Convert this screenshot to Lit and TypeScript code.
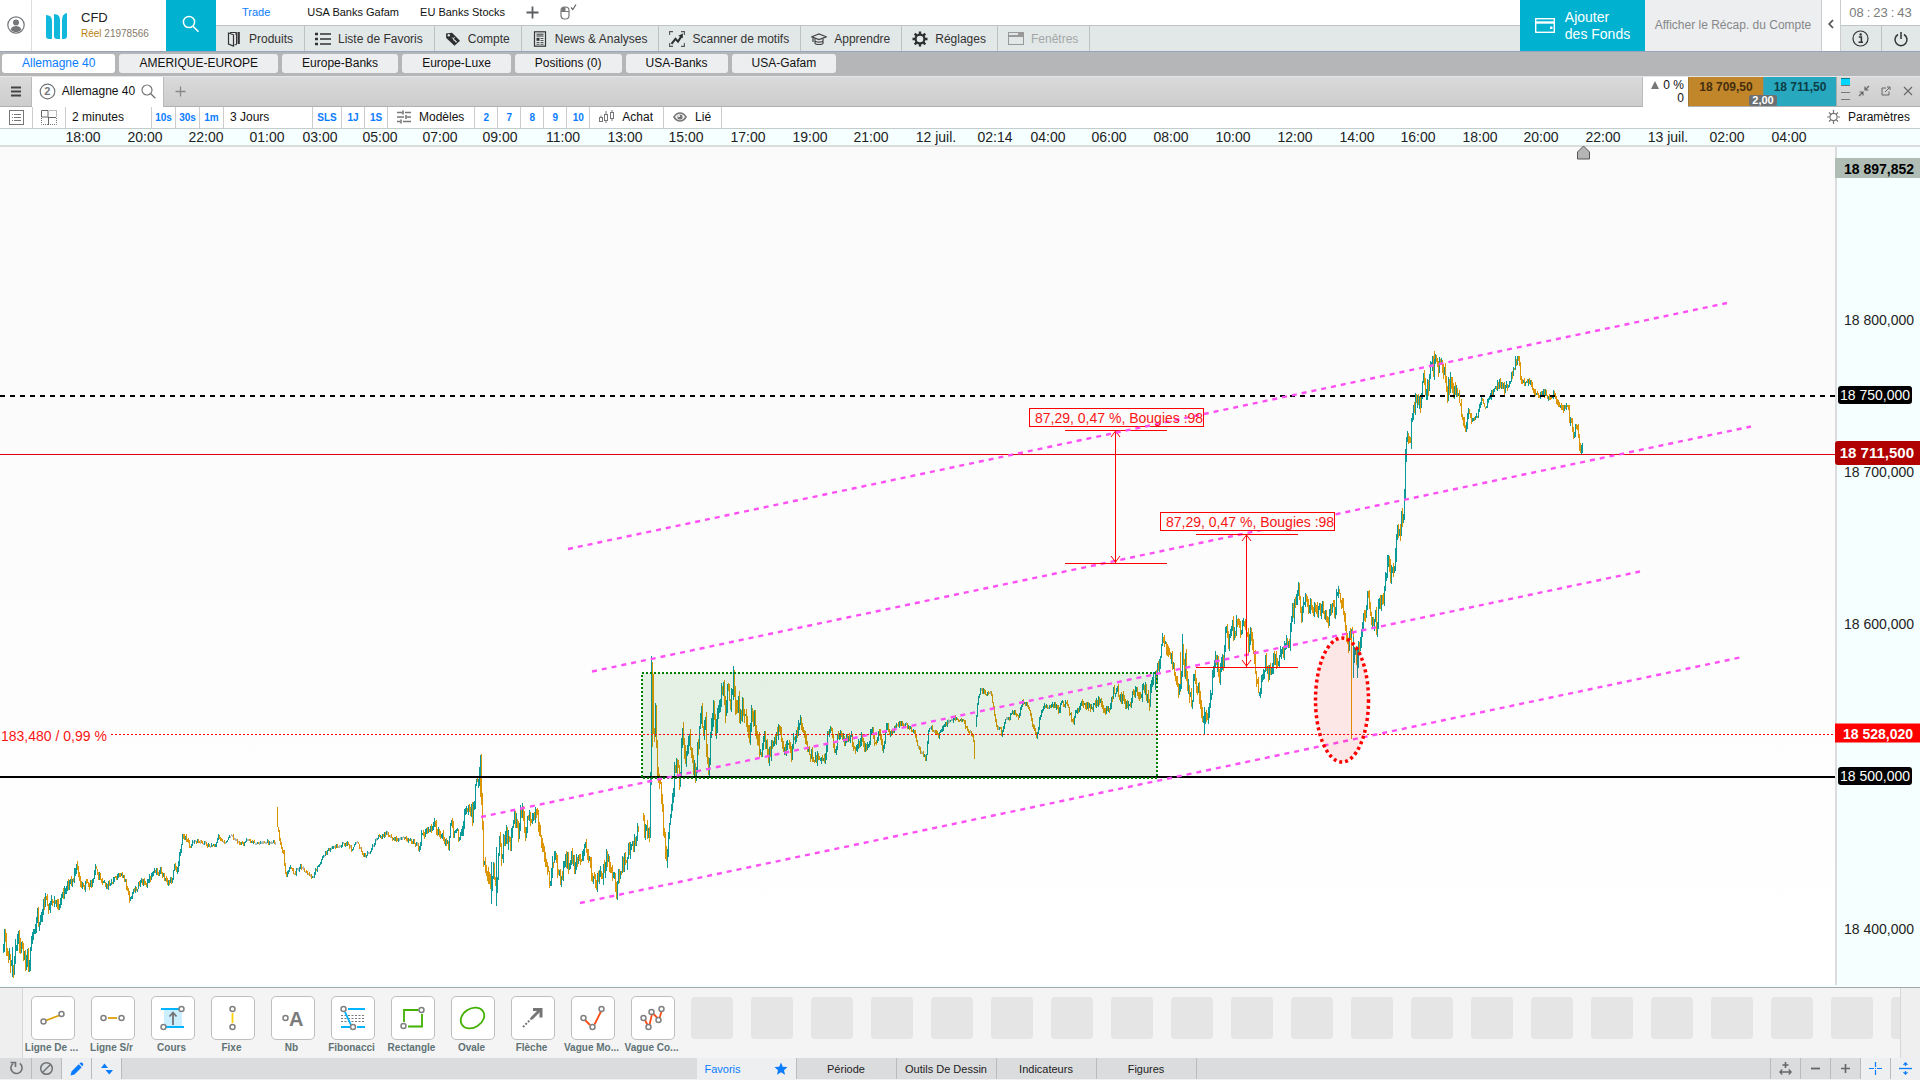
import { LitElement, html, svg, css, nothing } from "lit";
import { customElement, state } from "lit/decorators.js";
import { classMap } from "lit/directives/class-map.js";

/* ---------- icons ---------- */

const icon = (w: number, h: number, body: unknown) =>
  html`<svg class="ic" width=${w} height=${h} viewBox="0 0 ${w} ${h}" aria-hidden="true">${body}</svg>`;

const I = {
  user: icon(18, 20, svg`<circle cx="9" cy="10" r="8.2" fill="none" stroke="#75787b" stroke-width="1.2"/><circle cx="9" cy="7.6" r="3" fill="#75787b"/><path d="M3.6 14.4c1-2.6 3-3.4 5.400-3.400s4.400.8 5.400 3.400c-1.400 1.800-3.300 2.700-5.400 2.700s-4-.9-5.400-2.700z" fill="#75787b"/>`),
  logo: icon(22, 26, svg`<path d="M0 2q6 0 6 6v18H3q-3 0-3-3zM8 1q6 0 6 6v19h-3q-3 0-3-3z" fill="#12b8dc"/><path d="M21 0q-5 1-5 7v19h2q3 0 3-3z" fill="#12b8dc"/>`),
  search: icon(18, 18, svg`<circle cx="7" cy="7" r="5.600" fill="none" stroke="#fff" stroke-width="1.500"/><path d="M11 11.300l5.500 5.500" stroke="#fff" stroke-width="1.600"/>`),
  plusBig: icon(13, 13, svg`<path d="M6.500.5v12M.5 6.500h12" stroke="#5c5f61" stroke-width="1.800"/>`),
  mouse: icon(17, 16, svg`<rect x="1" y="3" width="8" height="12" rx="3.500" fill="none" stroke="#777" stroke-width="1.200"/><path d="M1 7.500h8M5 3v4.500" stroke="#777"/><path d="M1.500 7V5q.5-2 3.500-2v4z" fill="#777"/><path d="M11 3.500l1.800 2 3.200-5" fill="none" stroke="#666" stroke-width="1.200"/>`),
  book: icon(16, 16, svg`<path d="M2.500 2l5 1.800V15l-5-2z" fill="none" stroke="#333" stroke-width="1.200"/><path d="M4 1.500h6.500v12.200H8.500M9 3h1" fill="none" stroke="#333" stroke-width="1"/><path d="M11.500 1h2.300v12h-2.300z" fill="#333"/>`),
  list: icon(16, 14, svg`<path d="M5 2h11M5 7h11M5 12h11" stroke="#333" stroke-width="1.600"/><path d="M0 2h3M0 7h3M0 12h3" stroke="#333" stroke-width="2.600"/>`),
  tag: icon(16, 16, svg`<path d="M1 2.500L7 1.800l8 8-5.500 5L1.200 7z" fill="#2d2f31"/><circle cx="3.800" cy="4.300" r="1.200" fill="#e2e7e7"/><path d="M7 6.500l4.500 4.500M9.800 6.500q-2 .2-1.300 2t1.600 1.300 1 1.800" stroke="#e2e7e7" fill="none"/>`),
  news: icon(16, 16, svg`<rect x="2.500" y=".8" width="11" height="14.400" fill="none" stroke="#333" stroke-width="1.200"/><path d="M4.500 3.200h7M4.500 5h7" stroke="#333"/><path d="M4.500 6.800h3v3h-3z" fill="#333"/><path d="M8.500 7.500h3M8.500 9.500h3M4.500 11.500h3M8.500 11.500h3M4.500 13.300h3M8.500 13.300h3" stroke="#555"/>`),
  scan: icon(16, 16, svg`<path d="M.6 4V.6H4M12 .6h3.400V4M15.400 12v3.400H12M4 15.400H.6V12" fill="none" stroke="#555" stroke-width="1.100"/><path d="M2.500 12.800l4-5 2.500 2.800 3.500-5.500" fill="none" stroke="#2d2f31" stroke-width="2"/><path d="M9.300 4.800l4.500-2.300v4.700z" fill="#2d2f31"/>`),
  cap: icon(16, 14, svg`<path d="M.8 4.800L8 2l7.200 2.800L8 7.600z" fill="none" stroke="#444" stroke-width="1.200"/><path d="M4 6.500v4.500q0 1.500 4 1.500t4-1.500V6.500M4.500 9.500q3.500 1.300 7 0M2 6v4" fill="none" stroke="#444" stroke-width="1.200"/>`),
  gear: icon(16, 16, svg`<circle cx="8" cy="8" r="4.400" fill="none" stroke="#2d2f31" stroke-width="2.200"/><g stroke="#2d2f31" stroke-width="2.400"><path d="M8 .5v3M8 12.500v3M.5 8h3M12.500 8h3M2.700 2.700l2 2M11.300 11.300l2 2M13.300 2.700l-2 2M4.700 11.300l-2 2"/></g>`),
  win: icon(16, 13, svg`<rect x=".5" y=".5" width="15" height="12" fill="none" stroke="#999"/><path d="M1 3.500h9" stroke="#999"/><path d="M10 1h5v3h-5z" fill="#999"/><path d="M1 4.500h14" stroke="#999"/>`),
  wallet: icon(20, 15, svg`<rect x=".7" y=".7" width="18.600" height="13.600" fill="none" stroke="#fff" stroke-width="1.400"/><path d="M1 4.500h18" stroke="#fff" stroke-width="2.400"/><path d="M15 8.500h2.500v2.500H15z" fill="#fff"/>`),
  chev: icon(6, 10, svg`<path d="M5 1L1.200 5 5 9" fill="none" stroke="#555" stroke-width="1.800"/>`),
  info: icon(17, 17, svg`<circle cx="8.500" cy="8.500" r="7.500" fill="none" stroke="#333" stroke-width="1.200"/><path d="M6.800 7h2.600v5M6.500 12.300h4.500" fill="none" stroke="#333" stroke-width="1.500"/><circle cx="8.700" cy="4.500" r="1.200" fill="#333"/>`),
  power: icon(16, 16, svg`<path d="M5 3.500a6 6 0 1 0 6 0M8 1v7" fill="none" stroke="#333" stroke-width="1.500"/>`),
  burger: icon(10, 11, svg`<path d="M0 1.500h10M0 5.500h10M0 9.500h10" stroke="#444" stroke-width="1.800"/>`),
  two: icon(17, 17, svg`<circle cx="8.500" cy="8.500" r="7.300" fill="none" stroke="#75787b" stroke-width="1.200"/>`),
  lens: icon(15, 15, svg`<circle cx="6" cy="6" r="5" fill="none" stroke="#777" stroke-width="1.200"/><path d="M9.600 9.600l4.700 4.700" stroke="#777" stroke-width="1.400"/>`),
  plusThin: icon(11, 11, svg`<path d="M5.500.5v10M.5 5.500h10" stroke="#888" stroke-width="1.300"/>`),
  shrink: icon(12, 12, svg`<path d="M11 1L7.500 4.500M7 1.500V5h3.500M1 11l3.500-3.500M1.500 7H5v3.500" fill="none" stroke="#666" stroke-width="1.200"/>`),
  popout: icon(10, 10, svg`<path d="M5 2H1v7h7V5.500M4 6l4.500-4.500M6 1h3v3" fill="none" stroke="#666" stroke-width="1"/>`),
  close: icon(10, 10, svg`<path d="M1 1l8 8M9 1L1 9" stroke="#666" stroke-width="1.100"/>`),
  listBox: icon(15, 15, svg`<rect x=".5" y=".5" width="14" height="14" fill="none" stroke="#777"/><path d="M5 4.500h7M5 7.500h7M5 10.500h7" stroke="#777"/><path d="M3 4.500h1M3 7.500h1M3 10.500h1" stroke="#777"/>`),
  layout: icon(16, 15, svg`<path d="M.5 7V.5H7V7zM7 7.500h8M7.500 7v8" fill="none" stroke="#666"/><path d="M8.500.5h7v6.500M.5 8v6.500H7M15.500 8v6.500H8" fill="none" stroke="#777" stroke-dasharray="1 1"/>`),
  sliders: icon(14, 14, svg`<path d="M0 2.500h5M8 2.500h6M0 7h7M10 7h4M0 11.500h3M6 11.500h8" stroke="#777" stroke-width="1.300"/><path d="M6 .5v4M9 5v4M4 9.500v4" stroke="#777" stroke-width="1.600"/>`),
  candles: icon(15, 13, svg`<rect x=".5" y="7.500" width="3" height="4" fill="none" stroke="#777"/><path d="M2 5.500v2M7 1v3M7 10.500V13M13 0v2M13 8.500V11" stroke="#777"/><rect x="5.500" y="4.500" width="3" height="6" fill="none" stroke="#777"/><rect x="11.500" y="2.500" width="3" height="6" fill="none" stroke="#777"/>`),
  eye: icon(14, 12, svg`<path d="M1 6q2.500-4 6-4t6 4q-2.500 4-6 4T1 6z" fill="none" stroke="#777" stroke-width="1.600"/><circle cx="7" cy="6" r="2.600" fill="#777"/><circle cx="6" cy="5" r="1.100" fill="#fff"/>`),
  cog: icon(13, 14, svg`<circle cx="6.500" cy="7" r="3.600" fill="none" stroke="#777" stroke-width="1.200"/><path d="M6.500 0v3M6.500 11v3M0 7h2.500M10.500 7H13M2 2.500l2 2M9 9.500l2 2M11 2.500l-2 2M4 9.500l-2 2" stroke="#777" stroke-width="1.200"/>`),
  reload: icon(15, 15, svg`<path d="M10.800 2.400a5.600 5.600 0 1 1-6.500-.1" fill="none" stroke="#6f7274" stroke-width="1.600"/><path d="M1.500 1.500h5v4.500" fill="none" stroke="#6f7274" stroke-width="1.600"/>`),
  forbid: icon(15, 15, svg`<circle cx="7.500" cy="7.500" r="5.800" fill="none" stroke="#6f7274" stroke-width="1.500"/><path d="M11.500 3.500l-8 8" stroke="#6f7274" stroke-width="1.500"/>`),
  pencil: icon(14, 14, svg`<path d="M0.500 13.500l1-4L8.700 2.300l3 3L4.500 12.500zM9.500 1.500l1.200-1q1-.4 1.900.5t.6 2l-1 1.200z" fill="#0a7cff"/>`),
  swap: icon(12, 12, svg`<path d="M0 5h7L3.500.5z" fill="#0a7cff"/><path d="M4.500 7H12l-3.700 4.500z" fill="#0a7cff"/>`),
  star: icon(14, 13, svg`<path d="M7 .5l1.800 4.200 4.700.4-3.500 3.100 1 4.600L7 10.300 3 12.800l1-4.600L.5 5.100l4.700-.4z" fill="#0a7cff"/>`),
  fit: icon(13, 13, svg`<path d="M6.500 0v6M3.500 3h6" stroke="#666" stroke-width="1.600"/><path d="M1 10h11M3.300 7.500L.8 10l2.500 2.500M9.700 7.500l2.500 2.500-2.500 2.500" fill="none" stroke="#666" stroke-width="1.300"/>`),
  minus: icon(11, 11, svg`<path d="M1 5.500h9" stroke="#666" stroke-width="1.800"/>`),
  plus: icon(11, 11, svg`<path d="M1 5.500h9M5.500 1v9" stroke="#666" stroke-width="1.600"/>`),
  cross: icon(13, 13, svg`<path d="M6.500 0v5M6.500 8v5M0 6.500h5M8 6.500h5M6 6.500h1" stroke="#0a7cff" stroke-width="1.200"/>`),
  split: icon(13, 13, svg`<path d="M0 6.500h13" stroke="#0a7cff" stroke-width="1.300"/><path d="M6.500 1v3M6.500 9v3M4.500 2.800l2-2 2 2M4.500 10.200l2 2 2-2" fill="none" stroke="#0a7cff" stroke-width="1.200"/>`),
};

/* Small ring that marks an anchor point of a drawing tool. */
const ring = (x: number, y: number) =>
  svg`<circle cx=${x} cy=${y} r="2.500" fill="#fff" stroke="#808080" stroke-width="1.500"/>`;

const tools = [
  { name: "Ligne De ...", art: svg`<path d="M15 24.500l13-5" stroke="#dca000" stroke-width="1.800"/>${ring(12.500, 25.500)}${ring(30.500, 18)}` },
  { name: "Ligne S/r", art: svg`<path d="M17 22h9" stroke="#dca000" stroke-width="1.800"/>${ring(12.500, 22)}${ring(30.500, 22)}` },
  { name: "Cours", art: svg`<path d="M13 13h18v18H13z" fill="#ccefff"/><path d="M10 13h19M14 31h19" stroke="#00b4ff" stroke-width="1.800"/><path d="M22 29V17M18.500 20.500L22 16.500l3.500 4" fill="none" stroke="#737373" stroke-width="1.800"/>${ring(30.500, 13)}${ring(12.500, 31)}` },
  { name: "Fixe", art: svg`<path d="M21.500 17v10" stroke="#ffcf00" stroke-width="1.800"/>${ring(21.500, 13)}${ring(21.500, 31)}` },
  { name: "Nb", art: svg`<text x="18" y="30" class="glyphA">A</text>${ring(14.500, 22)}` },
  { name: "Fibonacci", art: svg`<path d="M10 19.500h24M10 22.500h24M10 25.500h24" stroke="#777" stroke-dasharray="2 1.500"/><path d="M17 13h17M10 31h9M26 31h8M14 16l6 13" stroke="#00b4ff" stroke-width="1.800"/>${ring(12.500, 13)}${ring(22, 31)}` },
  { name: "Rectangle", art: svg`<path d="M13 26V14h14.500M31 18v12.500H17" fill="none" stroke="#42b100" stroke-width="1.800"/>${ring(30.500, 14)}${ring(12.500, 30)}` },
  { name: "Ovale", art: svg`<ellipse cx="21.500" cy="22" rx="12.500" ry="9.500" transform="rotate(-32 21.500 22)" fill="none" stroke="#42b100" stroke-width="1.800"/>` },
  { name: "Flèche", art: svg`<path d="M12 31l9-9" stroke="#757575" stroke-width="2" stroke-dasharray="2 1.500"/><path d="M20.500 22.500l9-9" stroke="#757575" stroke-width="2.800"/><path d="M22 13.500h8v8" fill="none" stroke="#757575" stroke-width="3"/>` },
  { name: "Vague Mo...", art: svg`<path d="M14 24l5 5M23.500 28.500l6.500-13" stroke="#ff4c12" stroke-width="1.800"/>${ring(12.500, 22)}${ring(21.500, 31)}${ring(30.500, 13)}` },
  { name: "Vague Co...", art: svg`<path d="M14 24l2.500 5M18.500 29L21 18M22.500 18l5 5M28.500 22l2.500-8" stroke="#ff4c12" stroke-width="1.800"/>${ring(12.500, 22)}${ring(17.500, 31)}${ring(20.500, 16)}${ring(27.500, 24)}${ring(30.500, 13)}` },
];

/* ---------- chart data ---------- */

const PLOT_W = 1835;
const PLOT_H = 840;

/* Price path as [x, y] runs inside the plot; a new run starts after a gap. */
const scale = (s: string, x0: number, sx: number, y0: number): number[][] =>
  s.trim().split(/\s+/).map((p) => {
    const [x, y] = p.split(",").map(Number);
    return [x0 + x / sx, y0 + y / 3];
  });

const runA = scale(`5,680 10,665 14,650 20,705 27,720 32,750 38,700 45,650 52,690 58,705 62,725 66,705 70,740 76,680 80,640 84,650 90,595 95,600
100,590 106,555 112,535 120,570 128,545 135,530 142,570 152,535 160,512 172,480 178,490 187,435 195,485 205,505 213,475 220,495 228,480
234,440 245,475 260,500 275,485 285,470 302,460 318,540 330,505 350,485 360,490 370,468 385,450 400,465 415,495 425,460 430,435 435,450
447,350 455,355 465,380 480,365 515,375 528,375 535,350 550,370 565,345 595,375 605,358 640,372 655,365 676,370`, 0, 2.45, 573);
const runB = scale(`677,268 680,320 684,350 690,390 695,402 700,465 710,438 722,460 735,440 765,470 780,440 790,410 805,390 820,380 850,370 862,390
875,362 892,410 905,395 925,350 950,340 965,360 990,355 1020,370 1027,395 1033,345 1050,335 1065,315 1080,345 1100,375 1103,300 1108,320
1115,350 1119,320 1125,350 1131,340 1140,270 1155,275 1158,300 1163,230 1167,190 1170,180 1174,165 1177,122 1179,200 1182,290 1184,400 1187,440
1190,430 1197,470 1203,520 1207,450 1212,470 1216,530 1220,430 1223,370 1230,430 1234,370 1240,330 1250,390 1255,310 1260,275 1270,340
1275,275 1280,275 1288,340 1297,275 1303,310 1313,265 1318,310 1322,330 1330,390 1340,450 1348,490 1354,430 1362,400 1366,450 1375,490
1386,410 1395,440 1400,400 1407,440 1412,410 1422,430 1434,365 1448,450 1460,500 1470,450 1475,480 1487,400 1497,460 1502,455 1512,510
1520,440 1535,420 1550,380 1558,360 1565,330`, 0, 2.45, 573);
const runC = scale(`110,540 120,590 125,545 130,570 132,400 134,70 137,100 139,240 142,310 145,210 149,360 152,440 157,400 162,500 166,560 169,610 172,625 175,675
178,600 184,520 190,470 197,370 205,390 210,420 215,250 219,330 224,400 232,270 237,320 242,360 250,410 256,320 261,260 266,215
270,280 275,240 279,330 284,400 288,310 294,250 297,210 302,270 308,240 312,190 318,160 322,130 328,210 335,140 341,220 346,150 350,95
353,190 358,210 362,190 366,240 372,210 378,210 384,240 390,310 396,210 405,250 412,300 420,355 425,300 430,280 437,330 445,360 450,310
460,290 468,260 475,290 485,355 490,300 495,305 500,350 504,290 515,275 525,255 535,270 540,310 548,350 553,330 558,365 570,350 582,365
590,345 594,280 604,275 615,335 622,280 635,300 655,290 670,335 682,295 700,330 710,260 718,320 730,280 740,340 744,290 750,260 760,285
775,250 800,255 822,275 830,320 852,355 857,290 860,260 870,270 885,285 905,250 925,235 948,240 965,280 975,290 978,345`, 600, 2.613, 493);
const runD = scale(`982,262 985,200 990,175 995,145 1010,165 1020,150 1028,200 1033,240 1040,275 1045,250 1050,290 1060,230 1070,235 1082,215 1095,230 1103,185
1120,200 1132,260 1142,295 1148,240 1160,200 1187,195 1200,215 1205,185 1220,195 1235,245 1250,210 1262,185 1280,205 1305,180 1322,215
1335,190 1341,150 1348,150 1362,170 1378,205 1390,170 1400,150 1412,180 1420,145 1427,150 1435,205 1442,110 1446,130`, 600, 2.613, 493);
const runE = scale(`463,915 472,870 478,850 483,815 488,790 495,795 500,800 507,805 515,840 527,900 535,945 543,920 548,780 553,870 557,830 562,910 570,940
575,980 582,890 586,880 590,930 594,920 602,1000 608,1030 613,1045 617,990 622,1000 630,960 637,900 645,850 650,835 655,880 660,910 664,840 670,850
676,760 680,740 685,790 695,735 705,770 713,715 722,750 728,725 735,740 745,790 751,750 757,770 765,850 772,930 778,930 785,910 790,890
798,845 805,880 813,870 825,830 835,860 845,810 860,800 866,810 875,720 885,670 895,625 900,670 905,710 912,670 918,640 925,680 931,660 938,700 945,680
955,700 960,690 970,690 985,725 995,670 1005,690 1014,620 1020,645 1027,665 1035,740 1040,760 1045,800 1050,750 1058,760 1061,850 1066,790
1071,880 1075,770 1080,820 1085,750 1090,690 1097,715 1103,640 1110,680 1118,740 1122,700 1130,735 1136,680 1145,660 1151,640 1157,590 1166,540 1172,600 1182,570
1189,485 1195,440 1200,480 1205,410 1212,380 1214,300 1216,230 1222,170 1230,200 1235,90 1240,105 1245,60 1252,50 1260,65`, 1000, 3, 233);
const runF = scale(`361,215 366,180 370,150 378,185 388,145 395,95 400,125 407,68 411,88 417,110 430,110 438,140 442,190 448,175 455,155 465,190 475,175
480,230 486,255 492,295 500,275 505,240 515,265 522,280 532,255 538,230 550,210 556,240 568,195 580,190 592,160 605,165 615,180 632,150 640,120 648,90
657,95 662,150 672,155 685,150 695,170 705,200 720,195 730,185 740,190 748,205 760,190 767,205 775,230 790,238 800,225 806,250 808,270 817,290 822,310
828,290 834,310 840,350 848,368`, 1300, 3, 183);

/* Typical half-height of a bar, by x. */
const ampAt: number[][] = [
  [0, 16], [40, 12], [70, 8], [120, 5], [175, 7], [190, 5], [215, 3], [275, 3], [280, 5], [330, 3], [410, 4], [440, 8], [455, 9], [490, 15],
  [560, 11], [640, 14], [720, 16], [770, 12], [830, 9], [880, 8], [900, 4], [1040, 4], [1110, 8], [1150, 12], [1260, 14], [1330, 11],
  [1400, 14], [1450, 14], [1470, 7], [1540, 6], [1565, 7], [1583, 12], [1600, 12],
];

/* Single bars whose wicks reach far beyond their neighbours: [x, high, low]. */
const longUp = [[496, 700, 759], [491, 715, 757], [651, 509, 638], [733, 521, 545], [1182, 487, 530], [1353, 490, 580], [1357, 500, 531], [12, 800, 830], [1204, 560, 587]];
const longDown = [[480, 611, 650], [1351, 484, 592], [1180, 505, 545], [1434, 204, 225], [652, 523, 600]];

function lerp(pts: number[][], x: number): number {
  for (let i = 1; i < pts.length; i++) {
    if (x <= pts[i][0]) {
      const [ax, ay] = pts[i - 1];
      const [bx, by] = pts[i];
      return ay + ((by - ay) * (x - ax)) / (bx - ax || 1);
    }
  }
  return pts[pts.length - 1][1];
}

function buildBars() {
  let seed = 20240712;
  const rnd = () => {
    seed = (seed * 1664525 + 1013904223) >>> 0;
    return seed / 4294967296;
  };
  const out = { up: "", down: "", flat: "" };
  for (const run of [runA, runB, runC, runD, [...runE, ...runF]]) {
    const first = Math.ceil(run[0][0]);
    const last = Math.floor(run[run.length - 1][0]);
    let prev = run[0][1];
    for (let x = first; x <= last; x++) {
      const amp = lerp(ampAt, x);
      const close = lerp(run, x + 0.5) + (rnd() - 0.5) * amp;
      const top = Math.round(Math.min(prev, close) - rnd() * amp * 0.55);
      const bottom = Math.max(top + 2, Math.round(Math.max(prev, close) + rnd() * amp * 0.55));
      const kind = amp < 5 && Math.abs(close - prev) < 0.6 ? "flat" : close < prev ? "up" : "down";
      out[kind] += `M${x + 0.5} ${top}V${bottom}`;
      prev = close;
    }
  }
  for (const [x, a, b] of longUp.filter(([x]) => x !== 1353)) out.up += `M${x + 0.5} ${a}V${b}`;
  out.up += "M1353.5 490V531";
  for (const [x, a, b] of longDown) out.down += `M${x + 0.5} ${a}V${b}`;
  return out;
}
const bars = buildBars();

const times: [string, number][] = [
  ["18:00", 83], ["20:00", 145], ["22:00", 206], ["01:00", 267], ["03:00", 320], ["05:00", 380], ["07:00", 440], ["09:00", 500],
  ["11:00", 563], ["13:00", 625], ["15:00", 686], ["17:00", 748], ["19:00", 810], ["21:00", 871], ["12 juil.", 936], ["02:14", 995],
  ["04:00", 1048], ["06:00", 1109], ["08:00", 1171], ["10:00", 1233], ["12:00", 1295], ["14:00", 1357], ["16:00", 1418],
  ["18:00", 1480], ["20:00", 1541], ["22:00", 1603], ["13 juil.", 1668], ["02:00", 1727], ["04:00", 1789],
];

const prices: [string, number, string][] = [
  ["18 897,852", 21, "top"],
  ["18 800,000", 173, ""],
  ["18 750,000", 249, "level"],
  ["18 700,000", 326, ""],
  ["18 711,500", 307, "last"],
  ["18 600,000", 478, ""],
  ["18 528,020", 587, "alert"],
  ["18 500,000", 630, "level"],
  ["18 400,000", 784, ""],
];

const pct = (v: number, total: number) => `${(v / total) * 100}%`;

const measure = (x: number, top: number) => svg`
  <path class="red" d="M${x - 50} ${top + 0.5}h102M${x - 50} ${top + 133.500}h102M${x + 0.5} ${top}v133"/>
  <path class="red thin" d="M${x - 4} ${top + 7}l4.500-6 4.500 6M${x - 4} ${top + 126}l4.500 6 4.500-6"/>`;

@customElement("app-root")
export class AppRoot extends LitElement {
  @state() private workspace = "Allemagne 40";
  @state() private toolTab = "Favoris";

  static styles = css`
    :host { display: block; font-family: "Liberation Sans", Arial, sans-serif; font-size: 12px; color: #111; }
    * { box-sizing: border-box; }
    button { font: inherit; color: inherit; background: none; border: 0; padding: 0; margin: 0; cursor: pointer; white-space: nowrap; display: flex; align-items: center; justify-content: center; }
    .ic { display: block; flex: none; }
    .app { display: flex; flex-direction: column; min-height: 100vh; background: #fff; }

    header { display: flex; height: 52px; border-bottom: 1px solid #98a4bb; }
    .user { width: 32px; border-right: 1px solid #ddd; padding-bottom: 2px; }
    .brand { display: flex; align-items: center; gap: 13px; width: 134px; padding-left: 14px; }
    .brand h1 { margin: 0; font-size: 13px; font-weight: 400; line-height: 16px; color: #222; }
    .brand p { margin: 0; font-size: 10px; line-height: 16px; color: #85796a; }
    .brand b { font-weight: 400; color: #b87f0c; }
    .find { width: 50px; background: #00b2cf; padding-bottom: 4px; }
    .menus { flex: 1; display: flex; flex-direction: column; min-width: 0; }
    .desks { height: 26px; display: flex; align-items: center; gap: 21px; padding: 0 0 1px 26px; font-size: 11px; border-bottom: 1px solid #bfc4c4; }
    .desks .on { color: #0a7cff; margin-right: 16px; }
    .modules { flex: 1; display: flex; background: #e2e7e7; color: #333; }
    .modules button { gap: 7px; padding: 0 11px 0 10px; border-right: 1px solid #bcc1c1; }
    .modules button:disabled { color: #a3a7a7; cursor: default; }
    .funds { width: 125px; background: #00b2cf; color: #fff; font-size: 14px; line-height: 17px; gap: 10px; text-align: left; }
    .recap { width: 177px; background: #edeef0; color: #85888a; border-right: 1px solid #ccc; padding-bottom: 2px; }
    .fold { width: 19px; border-right: 1px solid #ccc; padding-bottom: 4px; }
    .corner { width: 79px; display: flex; flex-direction: column; }
    .clock { height: 26px; display: flex; align-items: center; justify-content: center; gap: 3px; font-size: 13px; color: #7b7b7b; border-bottom: 1px solid #bfc4c4; }
    .sys { flex: 1; display: grid; grid-template-columns: 1fr 1fr; background: #e2e7e7; }
    .sys button + button { border-left: 1px solid #bcc1c1; }

    .spaces { height: 24px; display: flex; gap: 4px; padding: 2px 2px 3px; background: #b5b6b8; }
    .spaces button { padding: 0 20px 2px; background: #edeef0; border-radius: 3px; }
    .spaces .on { background: #fff; color: #0a7cff; }

    .instr { height: 31px; display: flex; background: linear-gradient(#dadada, #cdcdcd); border-top: 1px solid #e6e6e6; border-bottom: 1px solid #b0b0b0; }
    .instr .menu { width: 32px; border-right: 1px solid #bbb; }
    .instr .tab { width: 132px; gap: 6px; background: #fff; border-right: 1px solid #bbb; height: 30px; padding-bottom: 2px; }
    .num { display: grid; place-items: center; font-size: 11px; font-weight: 700; color: #75787b; }
    .num > * { grid-area: 1 / 1; }
    .instr .add { width: 32px; }
    .grow { flex: 1; }
    .change { width: 46px; height: 30px; background: #fff; text-align: right; padding: 2px 4px 0 0; line-height: 13px; border-left: 1px solid #bbb; }
    .change i { display: inline-block; margin-right: 4px; border: solid transparent; border-width: 0 4px 8px; border-bottom-color: #777; }
    .change p { margin: 0; }
    .quote { position: relative; display: grid; grid-template-columns: 75px 73px; }
    .quote button { font-weight: 700; padding-bottom: 10px; border-left: 1px solid #a07a3a; }
    .sell { background: #c1852a; color: #46300f; }
    .buy { background: #27a8bf; color: #0c3d46; }
    .quote .buy { border-left-color: #5d97a0; }
    .spread { position: absolute; left: 61px; bottom: 0; width: 28px; height: 11px; border-radius: 2px; background: #6c7072; color: #fff; font-size: 11px; font-weight: 700; line-height: 11px; text-align: center; }
    .depth { width: 17px; display: flex; flex-direction: column; align-items: center; padding-top: 1px; gap: 6px; border-left: 1px solid #aaa; }
    .depth span { width: 9px; height: 1px; background: #777; }
    .depth .hot { height: 7px; background: #00d7ff; border-top: 1px solid #14788c; margin-bottom: -6px; }
    .wins { display: flex; gap: 1px; padding-right: 2px; }
    .wins button { width: 21px; padding-bottom: 1px; }

    .bar { height: 22px; display: flex; border-bottom: 1px solid #c4cccc; }
    .bar button { border-right: 1px solid #ccc; padding-bottom: 2px; }
    .bar .sq { width: 33px; padding-bottom: 1px; }
    .bar .term { width: 86px; justify-content: flex-start; padding-left: 6px; }
    .bar .wide { width: 89px; }
    .bar .q { width: 23px; font-size: 10px; font-weight: 700; color: #0a7cff; padding-bottom: 0; }
    .bar .t { width: 24px; }
    .bar .sls { width: 29px; }
    .bar .m { gap: 8px; padding: 0 10px 2px 9px; }
    .bar .settings { border: 0; gap: 8px; padding: 0 10px 2px 0; }

    .times { position: relative; height: 18px; background: #f5ffff; border-bottom: 2px solid #dcdcdc; overflow: hidden; font-size: 14px; line-height: 17px; color: #222; }
    .times span { position: absolute; top: 0; transform: translateX(-50%); white-space: nowrap; }

    .chart { flex: 1; display: grid; grid-template-columns: minmax(0, 1fr) 85px; min-height: 400px; border-bottom: 1px solid #a3a9a9; background: #f5ffff; }
    .plot { position: relative; background: linear-gradient(#fafafa, #fff); margin-bottom: 2px; }
    .plot > svg { position: absolute; inset: 0; width: 100%; height: calc(100% + 2px); overflow: visible; }
    .bars { fill: none; stroke-width: 1; shape-rendering: crispEdges; }
    .up { stroke: #0a9a9a; }
    .down { stroke: #dc9605; }
    .flat { stroke: #b0b8b4; }
    .trend { fill: none; stroke: #ff50f5; stroke-width: 2.4; stroke-dasharray: 5 5; }
    .red { fill: none; stroke: #f00; stroke-width: 1; shape-rendering: crispEdges; }
    .red.thin { shape-rendering: auto; }
    .gauge { position: absolute; font-size: 14px; line-height: 17px; height: 19px; width: 175px; padding: 2px 0 0 6px; color: #fa1515; white-space: nowrap; }
    .var { position: absolute; left: 1px; font-size: 14px; line-height: 16px; color: #fa1515; transform: translateY(-50%); white-space: nowrap; }
    .axis { position: relative; border-left: 2px solid #dcdcdc; margin-bottom: 2px; font-size: 14px; line-height: 16px; color: #222; }
    .axis span { position: absolute; right: 6px; transform: translateY(-50%); white-space: nowrap; }
    .axis .level { left: 1px; right: auto; padding: 1px 1px 0; width: 74px; height: 18px; border-radius: 3px; background: #000; color: #fff; text-align: center; }
    .axis .top { left: -2px; right: 0; height: 20px; background: #b0bdb5; color: #000; font-weight: 700; text-align: right; padding: 3px 6px 0 0; }
    .axis .last { left: -2px; right: 0; height: 24px; border-radius: 3px 0 0 3px; background: #b00000; color: #fff; font-size: 15px; font-weight: 700; text-align: right; padding: 4px 6px 0 0; }
    .axis .alert { left: -2px; right: 0; height: 19px; background: #f00; color: #fff; font-weight: 700; text-align: right; padding: 2px 7px 0 0; }

    .drawers { height: 70px; display: flex; padding: 0 19px 0 22px; background: #efefef; }
    .tray { flex: 1; min-width: 0; display: flex; overflow: hidden; background: #f4f4f4; border: solid #d5d8d8; border-width: 0 1px; padding-top: 8px; }
    .tool { width: 60px; flex: none; display: flex; flex-direction: column; align-items: center; justify-content: flex-start; gap: 1px; font-size: 10px; font-weight: 700; line-height: 14px; color: #5f7275; }
    .label { padding-right: 3px; }
    .tile { width: 44px; height: 44px; border: 1px solid #bdbfbf; border-radius: 5px; background: #fff; }
    .tile svg { display: block; margin: -1px; }
    .glyphA { font: 700 20px "Liberation Sans", Arial, sans-serif; fill: #7b7b7b; }
    .slot { width: 42px; height: 42px; flex: none; margin: 1px 10px 0 8px; border-radius: 4px; background: #e5e5e5; }

    footer { height: 22px; display: flex; justify-content: space-between; background: #dbdcde; border-bottom: 1px solid #f0f0f0; font-size: 11px; }
    .set { display: flex; padding-left: 2px; }
    .set button { width: 30px; border-right: 1px solid #bbb; }
    .set .lit { background: #eeeff1; }
    .left { flex: 1; }
    .right { flex: 1; justify-content: flex-end; padding: 0; }
    .set.right button { border-right: 0; border-left: 1px solid #bbb; }
    .cats { display: flex; padding-right: 29px; }
    .cats button { width: 100px; border-right: 1px solid #bbb; color: #222; }
    .cats .on { background: #eeeff1; color: #0a7cff; gap: 33px; justify-content: flex-end; padding-right: 8px; }
  `;

  private module(art: unknown, label: string, off = false) {
    return html`<button ?disabled=${off}>${art}${label}</button>`;
  }

  private quick(labels: string[], extra = "") {
    return labels.map((l) => html`<button class="q ${extra}">${l}</button>`);
  }

  private plot() {
    const w = PLOT_W;
    return html`
      <div class="plot">
        <svg viewBox="0 0 ${w} ${PLOT_H}" preserveAspectRatio="none" role="img" aria-label="Allemagne 40, 2 minutes">
          <path class="bars flat" d=${bars.flat}></path>
          <path class="bars down" d=${bars.down}></path>
          <path class="bars up" d=${bars.up}></path>
          <path d="M0 249h${w}" stroke="#000" stroke-width="2" stroke-dasharray="5 5"></path>
          <path d="M0 307.500h${w}" stroke="#e0000f" stroke-width="1"></path>
          <path d="M0 630h${w}" stroke="#000" stroke-width="2"></path>
          <rect x="642" y="526" width="515" height="105" fill="rgba(0,128,0,.1)" stroke="#008000" stroke-width="2" stroke-dasharray="2 2"></rect>
          <path d="M111 587.500H${w}" stroke="#f00" stroke-width="1" stroke-dasharray="2 2"></path>
          <path class="trend" d="M592 524.500L1751 279.500"></path>
          <path class="trend" d="M481 670L1640 424.500"></path>
          <path class="trend" d="M580 756L1740 510.500"></path>
          <rect x="1029.500" y="261.500" width="174" height="18" fill="#fbfbfb" stroke="#f00"></rect>
          <rect x="1160.500" y="365.500" width="174" height="18" fill="#fcfcfc" stroke="#f00"></rect>
          ${measure(1115, 283)}${measure(1246, 387)}
          <path class="trend" d="M568 402L1727 156"></path>
          <ellipse cx="1342" cy="553" rx="26.500" ry="62" fill="rgba(255,0,0,.09)" stroke="#f00" stroke-width="3.500" stroke-dasharray="3 3"></ellipse>
          <path d="M1577.500 5L1583.500-1l6 6v7h-12z" fill="#b5b5b5" stroke="#555"></path>
        </svg>
        <span class="var" style="top:${pct(590, PLOT_H)}">183,480 / 0,99 %</span>
        <span class="gauge" style="left:${pct(1029, w)};top:${pct(262, PLOT_H)}">87,29, 0,47 %, Bougies :98</span>
        <span class="gauge" style="left:${pct(1160, w)};top:${pct(366, PLOT_H)}">87,29, 0,47 %, Bougies :98</span>
      </div>`;
  }

  render() {
    const spaces = ["Allemagne 40", "AMERIQUE-EUROPE", "Europe-Banks", "Europe-Luxe", "Positions (0)", "USA-Banks", "USA-Gafam"];
    const cats = ["Favoris", "Période", "Outils De Dessin", "Indicateurs", "Figures"];
    return html`
      <div class="app">
        <header>
          <button class="user" aria-label="Profil">${I.user}</button>
          <div class="brand">${I.logo}
            <div><h1>CFD</h1><p><b>Réel</b> 21978566</p></div>
          </div>
          <button class="find" aria-label="Rechercher">${I.search}</button>
          <div class="menus">
            <nav class="desks">
              <button class="on">Trade</button><button>USA Banks Gafam</button><button>EU Banks Stocks</button>
              <button aria-label="Ajouter">${I.plusBig}</button><button aria-label="Souris">${I.mouse}</button>
            </nav>
            <nav class="modules">
              ${this.module(I.book, "Produits")}${this.module(I.list, "Liste de Favoris")}${this.module(I.tag, "Compte")}
              ${this.module(I.news, "News & Analyses")}${this.module(I.scan, "Scanner de motifs")}${this.module(I.cap, "Apprendre")}
              ${this.module(I.gear, "Réglages")}${this.module(I.win, "Fenêtres", true)}
            </nav>
          </div>
          <button class="funds">${I.wallet}<span>Ajouter<br />des Fonds</span></button>
          <button class="recap">Afficher le Récap. du Compte</button>
          <button class="fold" aria-label="Replier">${I.chev}</button>
          <div class="corner">
            <div class="clock"><span>08</span><span>:</span><span>23</span><span>:</span><span>43</span></div>
            <div class="sys"><button aria-label="Informations">${I.info}</button><button aria-label="Quitter">${I.power}</button></div>
          </div>
        </header>

        <nav class="spaces">
          ${spaces.map((s) => html`<button class=${classMap({ on: s === this.workspace })} @click=${() => (this.workspace = s)}>${s}</button>`)}
        </nav>

        <div class="instr">
          <button class="menu" aria-label="Menu">${I.burger}</button>
          <button class="tab"><span class="num">${I.two}<span>2</span></span>Allemagne 40${I.lens}</button>
          <button class="add" aria-label="Nouvel onglet">${I.plusThin}</button>
          <div class="grow"></div>
          <div class="change"><p><i></i>0 %</p><p>0</p></div>
          <div class="quote"><button class="sell">18 709,50</button><button class="buy">18 711,50</button><span class="spread">2,00</span></div>
          <div class="depth"><span class="hot"></span><span></span><span></span><span></span></div>
          <div class="wins"><button aria-label="Réduire">${I.shrink}</button><button aria-label="Détacher">${I.popout}</button><button aria-label="Fermer">${I.close}</button></div>
        </div>

        <div class="bar">
          <button class="sq" aria-label="Liste">${I.listBox}</button><button class="sq" aria-label="Disposition">${I.layout}</button>
          <button class="term">2 minutes</button>${this.quick(["10s", "30s", "1m"], "t")}
          <button class="term wide">3 Jours</button>${this.quick(["SLS"], "sls")}${this.quick(["1J", "1S"])}
          <button class="m">${I.sliders}Modèles</button>${this.quick(["2", "7", "8", "9", "10"])}
          <button class="m">${I.candles}Achat</button><button class="m">${I.eye}Lié</button>
          <div class="grow"></div>
          <button class="settings">${I.cog}Paramètres</button>
        </div>

        <div class="times">${times.map(([t, x]) => html`<span style="left:${pct(x, 1920)}">${t}</span>`)}</div>

        <main class="chart">
          ${this.plot()}
          <div class="axis">
            ${prices.map(([p, y, kind]) => html`<span class=${kind || nothing} style="top:${pct(y, PLOT_H)}">${p}</span>`)}
          </div>
        </main>

        <div class="drawers">
          <div class="tray">
            ${tools.map((t) => html`<button class="tool"><span class="tile"><svg width="44" height="44" viewBox="0 0 44 44" aria-hidden="true">${t.art}</svg></span><span class="label">${t.name}</span></button>`)}
            ${Array.from({ length: 21 }, () => html`<span class="slot"></span>`)}
          </div>
        </div>

        <footer>
          <div class="set left">
            <button aria-label="Réinitialiser">${I.reload}</button><button aria-label="Masquer">${I.forbid}</button>
            <button class="lit" aria-label="Dessiner">${I.pencil}</button><button class="lit" aria-label="Trier">${I.swap}</button>
          </div>
          <nav class="cats">
            ${cats.map((c) => html`<button class=${classMap({ on: c === this.toolTab })} @click=${() => (this.toolTab = c)}>${c}${c === this.toolTab ? I.star : nothing}</button>`)}
          </nav>
          <div class="set right">
            <button aria-label="Ajuster">${I.fit}</button><button aria-label="Dézoomer">${I.minus}</button><button aria-label="Zoomer">${I.plus}</button>
            <button class="lit" aria-label="Réticule">${I.cross}</button><button class="lit" aria-label="Échelle">${I.split}</button>
          </div>
        </footer>
      </div>`;
  }
}
